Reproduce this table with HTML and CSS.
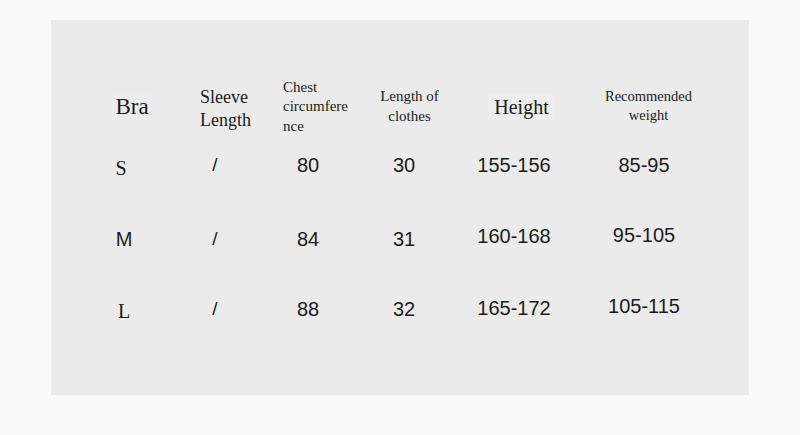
FILE: index.html
```html
<!DOCTYPE html>
<html>
<head>
<meta charset="utf-8">
<link rel="stylesheet" href="styles.css">
</head>
<body>
<div class="panel">
  <div class="table">
    <div class="hd c1"><span class="bra">Bra</span></div>
    <div class="hd c2"><span class="sleeve">Sleeve<br>Length</span></div>
    <div class="hd c3"><span class="chest">Chest<br>circumfere<br>nce</span></div>
    <div class="hd c4"><span class="lenc">Length of<br>clothes</span></div>
    <div class="hd c5"><span class="height">Height</span></div>
    <div class="hd c6"><span class="rec">Recommended<br>weight</span></div>

    <div class="cell c1 serif s">S</div>
    <div class="cell c2 slash">/</div>
    <div class="cell c3">80</div>
    <div class="cell c4">30</div>
    <div class="cell c5">155-156</div>
    <div class="cell c6">85-95</div>

    <div class="cell r2 c1 m">M</div>
    <div class="cell r2 c2 slash">/</div>
    <div class="cell r2 c3">84</div>
    <div class="cell r2 c4">31</div>
    <div class="cell r2 c5 up">160-168</div>
    <div class="cell r2 c6 up2">95-105</div>

    <div class="cell c1 serif l">L</div>
    <div class="cell c2 slash">/</div>
    <div class="cell c3">88</div>
    <div class="cell c4">32</div>
    <div class="cell c5 up">165-172</div>
    <div class="cell c6 up2">105-115</div>
  </div>
</div>
</body>
</html>
```

FILE: styles.css
```css
html, body {
  margin: 0;
  padding: 0;
  background: #fafafa;
}

body {
  width: 800px;
  height: 435px;
  overflow: hidden;
  padding-top: 20px;
  box-sizing: border-box;
}

.panel {
  margin-left: 51px;
  width: 698px;
  height: 375px;
  background: #ebebeb;
  box-sizing: border-box;
  padding: 55px 0 0 25px;
}

.table {
  display: grid;
  grid-template-columns: 96px 96px 80px 112px 108px 152px;
  grid-template-rows: 64px 72px 72px 72px;
  color: #1b1b1b;
}

.hd {
  display: flex;
  align-items: center;
  justify-content: center;
  font-family: "Liberation Serif", "Times New Roman", serif;
}

.hd span {
  display: block;
  text-align: center;
}

.bra {
  font-size: 23px;
  line-height: 28px;
  margin-left: 16px;
  background: #ececec;
  padding: 0 4px;
}

.hd.c2 {
  justify-content: flex-start;
  padding-left: 28px;
}

.hd .sleeve {
  font-size: 18px;
  line-height: 23px;
  margin-top: 4px;
  text-align: left;
}

.hd.c3 {
  justify-content: flex-start;
  padding-left: 15px;
}

.hd .chest {
  font-size: 15px;
  line-height: 19.5px;
  text-align: left;
}

.lenc {
  font-size: 15px;
  line-height: 20px;
  margin-left: 11px;
  margin-top: -2px;
}

.height {
  font-size: 20px;
  line-height: 26px;
  margin-left: 15px;
  background: #ededed;
  padding: 0 6px;
}

.rec {
  font-size: 14.5px;
  line-height: 18.5px;
  margin-left: 9px;
  margin-top: -3px;
}

.cell {
  font-family: "Liberation Sans", Arial, sans-serif;
  font-size: 20px;
  line-height: 24px;
  text-align: center;
  padding-top: 14px;
}

.cell.r2 {
  padding-top: 16px;
}

.cell.serif {
  font-family: "Liberation Serif", "Times New Roman", serif;
  padding-top: 17px;
}

.cell.s {
  padding-right: 6px;
}

.cell.l {
  padding-top: 16px;
}

.cell.slash {
  padding-right: 10px;
  font-size: 19px;
}

.cell.up {
  padding-top: 13px;
}

.cell.r2.up {
  padding-top: 13px;
}

.cell.up2 {
  padding-top: 11px;
}

.cell.r2.up2 {
  padding-top: 12px;
}
```
